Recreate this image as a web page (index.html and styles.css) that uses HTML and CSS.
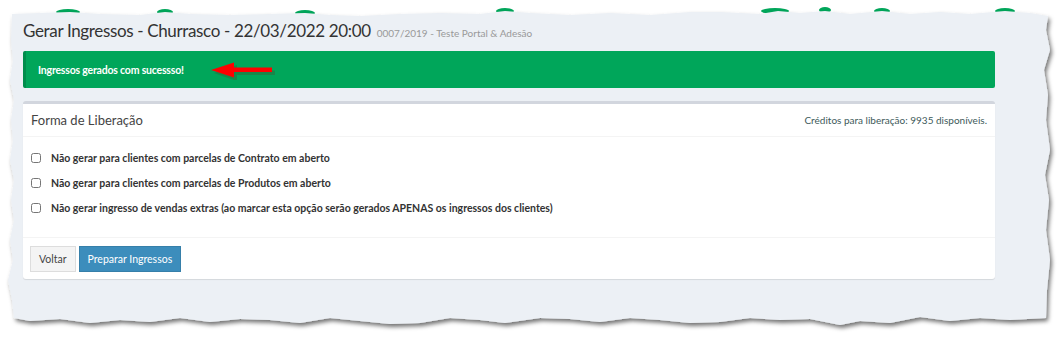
FILE: index.html
```html
<!DOCTYPE html>
<html lang="pt-BR">
<head>
    <meta charset="UTF-8">
    <title>Gerar Ingressos</title>
    <link rel="stylesheet" href="styles.css">
</head>
<body>
    <!-- Torn paper background -->
    <svg class="paper" width="1062" height="337" viewBox="0 0 1062 337">
        <defs>
            <filter id="shadow" x="-5%" y="-5%" width="110%" height="115%">
                <feDropShadow dx="2" dy="3" stdDeviation="2" flood-color="#000" flood-opacity="0.55"/>
            </filter>
        </defs>
        <g fill="#00a65a">
            <ellipse cx="68" cy="12" rx="12" ry="3"/>
            <ellipse cx="165" cy="12" rx="8" ry="3"/>
            <ellipse cx="305" cy="13" rx="10" ry="3"/>
            <ellipse cx="505" cy="11" rx="9" ry="3"/>
            <ellipse cx="775" cy="11" rx="14" ry="3"/>
            <ellipse cx="825" cy="10" rx="6" ry="3"/>
            <ellipse cx="882" cy="11" rx="8" ry="3"/>
            <ellipse cx="1005" cy="11" rx="10" ry="3"/>
        </g>
        <polygon filter="url(#shadow)" fill="#ecf0f5" points="12,14 40,13 70,12 100,14 140,15 165,12 190,14 230,15 270,14 305,13 330,15 360,16 400,14 440,13 480,14 505,11 530,13 570,15 610,13 650,15 690,12 720,12 760,14 778,11 800,13 825,11 850,14 882,11 910,14 940,12 970,14 1005,11 1030,13 1048,16 1046,30 1050,50 1044,70 1048,95 1046,120 1050,150 1045,175 1049,200 1046,230 1050,260 1047,290 1046,318 1010,320 980,318 950,321 920,317 890,323 860,321 840,325 810,319 780,320 750,318 720,322 690,323 660,320 630,318 600,322 570,319 540,318 505,323 480,320 450,318 420,323 390,324 360,321 330,318 300,323 270,320 240,319 210,322 180,318 150,322 120,320 90,323 60,319 30,321 14,318 12,300 8,280 13,260 10,240 14,220 11,200 14,180 10,160 13,140 11,120 14,100 10,80 13,60 11,40"/>
    </svg>

    <div class="content">
        <h1 class="page-title">Gerar Ingressos - Churrasco - 22/03/2022 20:00 <small>0007/2019 - Teste Portal &amp; Adesão</small></h1>

        <div class="alert">
            <span>Ingressos gerados com sucessso!</span>
            <svg class="arrow" width="66" height="18" viewBox="0 0 66 18">
                <path d="M2 9 L25 1 L25 6.5 L63 6.5 L63 11 L25 11 L25 17 Z" fill="#4a4a2a" opacity="0.35" transform="translate(2 2)"/>
                <path d="M1 8 L24 0.5 L24 5.5 L62 5.5 L62 10 L24 10 L24 15.5 Z" fill="#ff0000"/>
            </svg>
        </div>

        <div class="box">
            <div class="box-header">
                <h3>Forma de Liberação</h3>
                <span class="credits">Créditos para liberação: 9935 disponíveis.</span>
            </div>
            <div class="box-body">
                <label class="option"><input type="checkbox"> Não gerar para clientes com parcelas de Contrato em aberto</label>
                <label class="option"><input type="checkbox"> Não gerar para clientes com parcelas de Produtos em aberto</label>
                <label class="option"><input type="checkbox"> Não gerar ingresso de vendas extras (ao marcar esta opção serão gerados APENAS os ingressos dos clientes)</label>
            </div>
            <div class="box-footer">
                <button class="btn btn-default">Voltar</button>
                <button class="btn btn-primary">Preparar Ingressos</button>
            </div>
        </div>
    </div>
</body>
</html>
```

FILE: styles.css
```css
body {
    margin: 0;
    background-color: #fff;
    font-family: 'Lato', 'Open Sans', sans-serif;
    color: #333;
    width: 1062px;
    height: 337px;
    overflow: hidden;
    position: relative;
}

.paper {
    position: absolute;
    top: 0;
    left: 0;
}

.content {
    position: relative;
    padding: 20px 67px 0 23px;
}

.page-title {
    margin: 0;
    font-size: 17px;
    letter-spacing: -0.35px;
    font-weight: 400;
    line-height: 22px;
    color: #333;
}

.page-title small {
    font-size: 10px;
    letter-spacing: 0;
    color: #999;
    padding-left: 2px;
}

.alert {
    margin-top: 7px;
    height: 37px;
    box-sizing: border-box;
    background-color: #00a65a;
    border-left: 3px solid #008d4c;
    border-radius: 2px;
    color: #fff;
    font-size: 10.5px;
    letter-spacing: -0.2px;
    font-weight: 700;
    padding: 0 12px;
    display: flex;
    align-items: center;
}

.arrow {
    margin-left: 26px;
    margin-top: 2px;
}

.box {
    margin-top: 13px;
    background-color: #fff;
    border-top: 3px solid #d2d6de;
    border-radius: 3px;
    box-shadow: 0 1px 1px rgba(0,0,0,0.1);
}

.box-header {
    height: 32px;
    padding: 0 8px;
    display: flex;
    align-items: center;
    justify-content: space-between;
    border-bottom: 1px solid #f4f4f4;
}

.box-header h3 {
    margin: 0;
    font-size: 13px;
    font-weight: 400;
    color: #444;
}

.credits {
    font-size: 10px;
    color: #3d5a5a;
}

.box-body {
    padding: 8px 8px 17px;
    display: flex;
    flex-direction: column;
}

.option {
    display: flex;
    align-items: center;
    height: 25px;
    font-size: 10.5px;
    font-weight: 700;
    color: #333;
}

.option input {
    width: 10px;
    height: 10px;
    margin: 0 10px 0 0;
}

.box-footer {
    border-top: 1px solid #f4f4f4;
    padding: 8px 7px 7px;
    display: flex;
    gap: 3px;
}

.btn {
    height: 26px;
    padding: 0 8px;
    font-family: inherit;
    font-size: 10.5px;
    border-radius: 0;
    border: 1px solid #ddd;
    cursor: pointer;
}

.btn-default {
    background-color: #f4f4f4;
    color: #444;
}

.btn-primary {
    background-color: #3c8dbc;
    border-color: #367fa9;
    color: #fff;
}
```
